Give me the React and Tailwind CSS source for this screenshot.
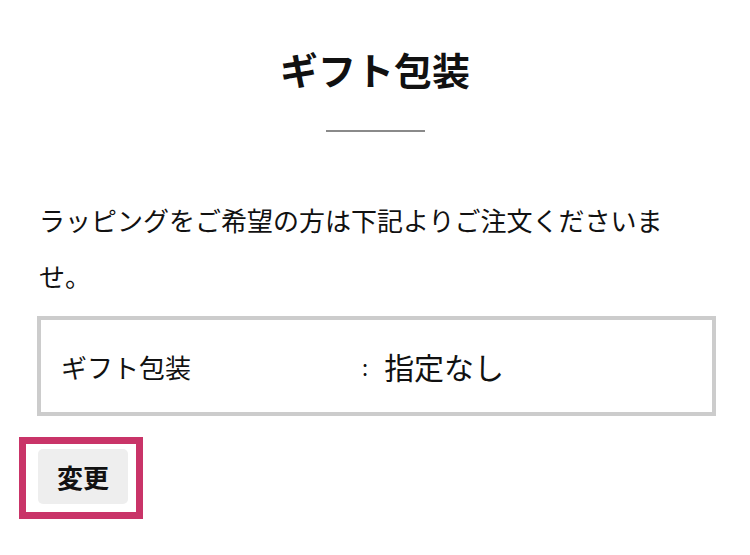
import React from 'react'

const jp = { fontFamily: '"Noto Sans CJK JP", "Noto Sans", sans-serif' }

export default function App() {
  return (
    <div style={jp} className="min-h-[555px] w-[750px] bg-white text-[#111]">
      <div className="px-[37px] pt-[40px]">
        <h1 className="text-center text-[38px] font-bold leading-[57px]">ギフト包装</h1>
        <div className="mx-auto mt-[33px] h-[2px] w-[99px] bg-[#8a8a8a]" />

        <p className="mt-[60px] w-[664px] pl-[2px] text-[26px] leading-[56px]">
          ラッピングをご希望の方は下記よりご注文くださいませ。
        </p>

        <div className="mt-[12px] flex h-[100px] w-[679px] items-center border-4 border-[#cccccc] pl-[20px]">
          <span className="w-[301px] text-[26px]">ギフト包装</span>
          <span className="text-[22px]">:</span>
          <span className="ml-[16px] text-[30px]">指定なし</span>
        </div>
      </div>

      <div className="ml-[19px] mt-[21px] inline-block border-[7px] border-[#c93468] pb-[8px] pl-[12px] pr-[8px] pt-[5px]">
        <button
          type="button"
          className="flex h-[55px] w-[90px] items-center justify-center rounded-[5px] bg-[#eeeeee] text-[26px] font-bold text-[#111]"
        >
          変更
        </button>
      </div>
    </div>
  )
}
